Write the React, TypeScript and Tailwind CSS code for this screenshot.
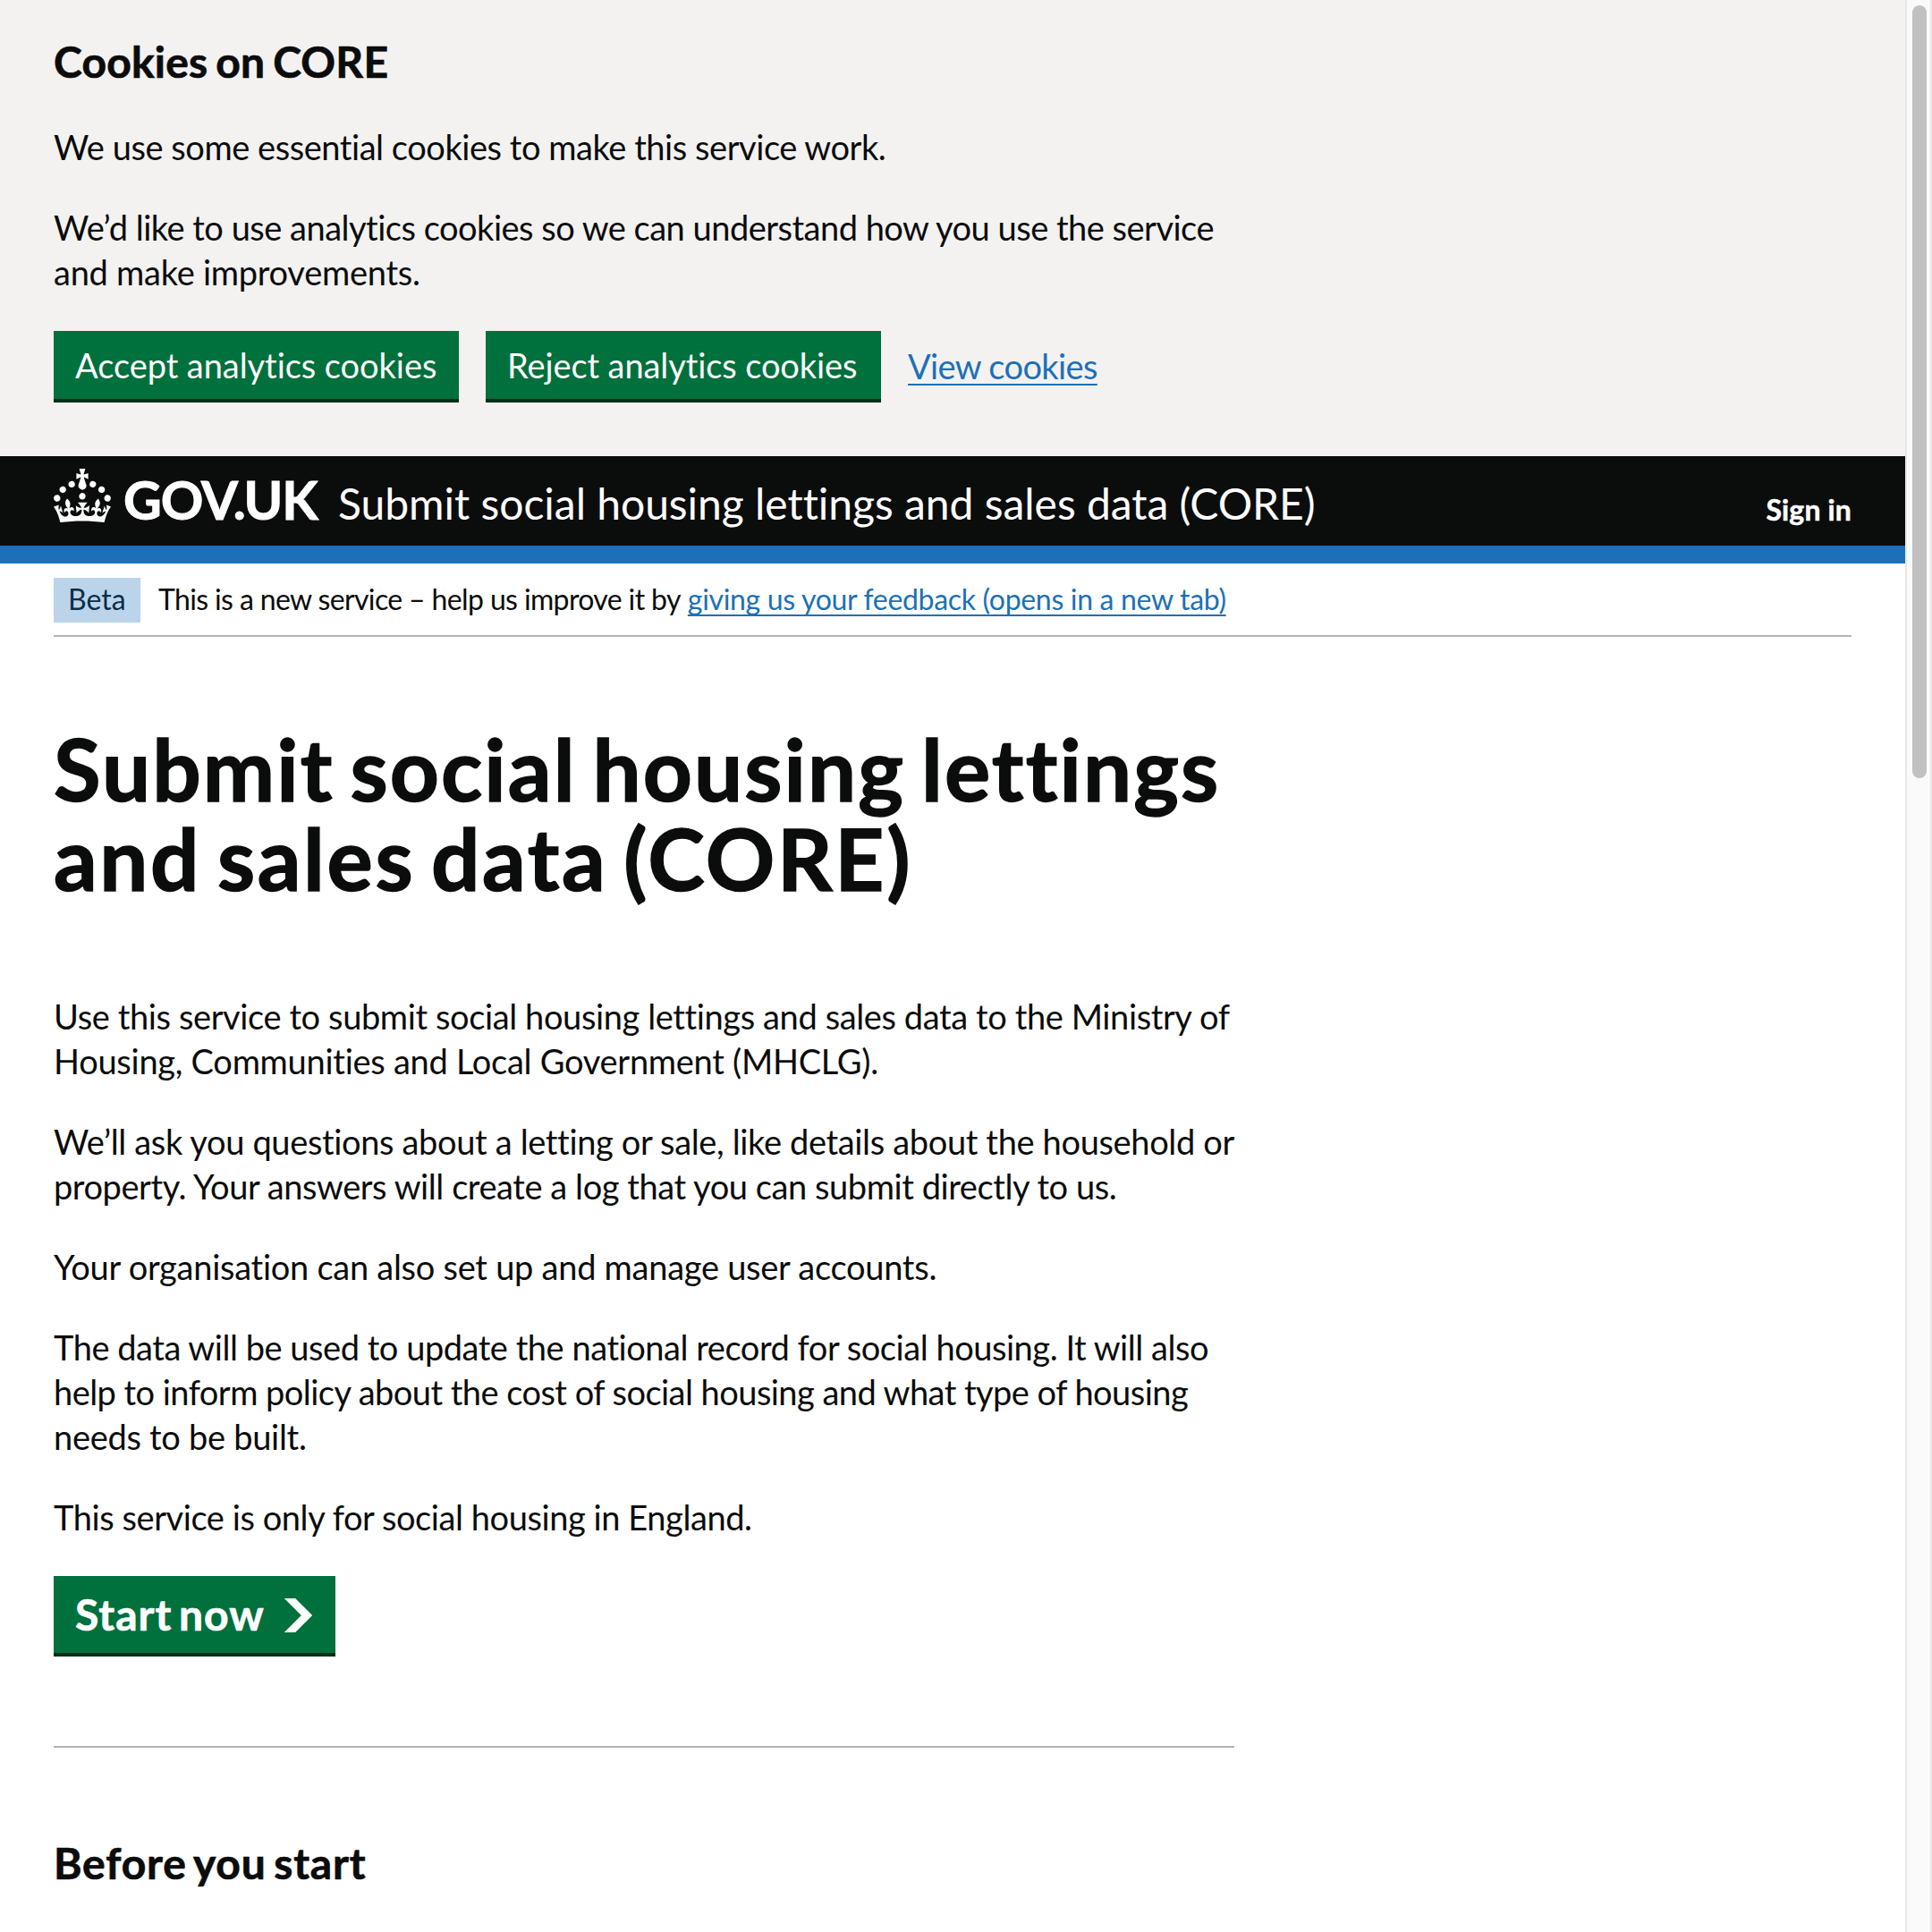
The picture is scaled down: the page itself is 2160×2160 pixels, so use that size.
import React from "react";

function Line({ className = "", children }: { className?: string; children: React.ReactNode }) {
  return <span className={`block whitespace-nowrap ${className}`}>{children}</span>;
}

function Crown() {
  return (
    <svg viewBox="0 0 32 30" className="mt-[14px] h-[60px] w-16 shrink-0" fill="currentColor" aria-hidden="true">
      <path d="M22.6 10.4c-1 .4-2-.1-2.4-1-.4-.9.1-2 1-2.4.9-.4 2 .1 2.4 1s-.1 2-1 2.4m-5.9 6.7c-.9.4-2-.1-2.4-1-.4-.9.1-2 1-2.4.9-.4 2 .1 2.4 1s-.1 2-1 2.4m10.8-3.7c-1 .4-2-.1-2.4-1-.4-.9.1-2 1-2.4.9-.4 2 .1 2.4 1s0 2-1 2.4m3.3 4.8c-1 .4-2-.1-2.4-1-.4-.9.1-2 1-2.4.9-.4 2 .1 2.4 1s-.1 2-1 2.4M17 4.7l2.3 1.2V2.5l-2.3.7-.2-.2.9-3h-3.4l.9 3-.2.2c-.1.1-2.3-.7-2.3-.7v3.4L15 4.7c.1.1.1.2.2.2l-1.3 4c-.1.2-.1.4-.1.6 0 1.1.8 2 1.9 2.2h.7c1-.2 1.9-1.1 1.9-2.1 0-.2 0-.4-.1-.6l-1.3-4c-.1-.2 0-.2.1-.3m-7.6 5.7c.9.4 2-.1 2.4-1 .4-.9-.1-2-1-2.4-.9-.4-2 .1-2.4 1s0 2 1 2.4m-5 3c.9.4 2-.1 2.4-1 .4-.9-.1-2-1-2.4-.9-.4-2 .1-2.4 1s.1 2 1 2.4m-3.2 4.8c.9.4 2-.1 2.4-1 .4-.9-.1-2-1-2.4-.9-.4-2 .1-2.4 1s0 2 1 2.4m14.8 11c4.4 0 8.6.3 12.3.8 1.1-4.5 2.4-7 3.7-8.8l-2.5-.9c.2 1.3.3 1.9 0 2.7-.4-.4-.8-1.1-1.1-2.3l-1.2 4c.7-.5 1.3-.8 2-.9-1.1 2.5-2.6 3.1-3.5 3-1.1-.2-1.7-1.2-1.5-2.1.3-1.2 1.5-1.5 2.1-.1 1.1-2.3-.8-3-2-2.3 1.9-1.9 2.1-3.5.6-5.6-2.1 1.6-2.1 3.2-1.2 5.5-1.2-1.4-3.2-.6-2.5 1.6.9-1.4 2.1-.5 1.9.8-.2 1.1-1.7 2.1-3.5 1.9-2.7-.2-2.9-2.1-2.9-3.6.7-.1 1.9.5 2.9 1.9l.4-4.3c-1.1 1.1-2.1 1.4-3.2 1.4.4-1.2 2.1-3 2.1-3h-5.4s1.7 1.9 2.1 3c-1.1 0-2.1-.2-3.2-1.4l.4 4.3c1-1.4 2.2-2 2.9-1.9-.1 1.5-.2 3.4-2.9 3.6-1.9.2-3.4-.8-3.5-1.9-.2-1.3 1-2.2 1.9-.8.7-2.3-1.2-3-2.5-1.6.9-2.2.9-3.9-1.2-5.5-1.5 2-1.3 3.7.6 5.6-1.2-.7-3.1 0-2 2.3.6-1.4 1.8-1.1 2.1.1.2.9-.3 1.9-1.5 2.1-.9.2-2.4-.5-3.5-3 .6 0 1.2.3 2 .9l-1.2-4c-.3 1.1-.7 1.9-1.1 2.3-.3-.8-.2-1.4 0-2.7l-2.9.9C1.3 23 2.6 25.5 3.7 30c3.7-.5 7.9-.8 12.3-.8" />
    </svg>
  );
}

function CookieBanner() {
  return (
    <section className="h-[510px] bg-[#f3f2f1] px-[60px] pt-[39px] text-[38px] leading-[50px]">
      <h2 className="text-[48px] leading-[60px] font-bold tracking-[0.2px] [word-spacing:-3px] [-webkit-text-stroke:0.7px]">
        Cookies on CORE
      </h2>
      <div className="mt-10 flex flex-col gap-10">
        <p>
          <Line className="tracking-[-0.45px]">We use some essential cookies to make this service work.</Line>
        </p>
        <p>
          <Line className="tracking-[-0.5px]">
            We’d like to use analytics cookies so we can understand how you use the service
          </Line>
          <Line className="tracking-[-0.26px]">and make improvements.</Line>
        </p>
      </div>
      <div className="mt-[41px] flex items-start gap-[30px]">
        <button className="h-[76px] w-[453px] bg-[#00703c] px-6 pt-[19px] pb-[19px] text-left leading-[38px] tracking-[-0.06px] whitespace-nowrap text-white shadow-[0_4px_0_#002d18]">
          Accept analytics cookies
        </button>
        <button className="h-[76px] w-[442px] bg-[#00703c] px-6 pt-[19px] pb-[19px] text-left leading-[38px] tracking-[-0.1px] whitespace-nowrap text-white shadow-[0_4px_0_#002d18]">
          Reject analytics cookies
        </button>
        <a className="mt-[14px] tracking-[-0.63px] text-[#1d70b8] underline decoration-2 underline-offset-[5px]">
          View cookies
        </a>
      </div>
    </section>
  );
}

function Header() {
  return (
    <header className="flex h-[120px] items-start border-b-[20px] border-[#1d70b8] bg-[#0b0c0c] px-[60px] whitespace-nowrap text-white">
      <Crown />
      <span className="mt-[18px] ml-[14px] w-[240px] text-[59px] leading-[61px] font-bold tracking-[-1.1px] [-webkit-text-stroke:1px]">
        GOV.UK
      </span>
      <span className="mt-[23px] text-[48px] leading-[59px] tracking-[-0.03px]">
        Submit social housing lettings and sales data (CORE)
      </span>
      <a className="mt-[39px] ml-auto text-[32px] leading-[41px] font-bold tracking-[0.15px] [-webkit-text-stroke:0.5px]">
        Sign in
      </a>
    </header>
  );
}

function PhaseBanner() {
  return (
    <div className="mx-[60px] flex h-[82px] items-start border-b-2 border-[#b1b4b6] pt-4 text-[32px] leading-10 whitespace-nowrap">
      <strong className="h-[50px] w-[97px] bg-[#bbd4ea] pt-1 pl-4 font-normal text-[#0c2d4a]">Beta</strong>
      <span className="mt-1 ml-5 tracking-[-0.63px]">This is a new service – help us improve it by</span>
      <a className="mt-1 ml-2 tracking-[-0.32px] text-[#1d70b8] underline decoration-2 underline-offset-[5px] [text-decoration-skip-ink:none]">
        giving us your feedback (opens in a new tab)
      </a>
    </div>
  );
}

function StartPage() {
  return (
    <main className="ml-[60px] w-[1320px] pt-[97px] text-[38px] leading-[50px]">
      <h1 className="text-[96px] leading-[100px] font-bold [-webkit-text-stroke:1.4px]">
        <Line className="tracking-[2.1px] [word-spacing:-7.5px]">Submit social housing lettings</Line>
        <Line className="tracking-[2.6px] [word-spacing:-8.1px]">and sales data (CORE)</Line>
      </h1>
      <div className="mt-[102px] flex flex-col gap-10">
        <p>
          <Line className="tracking-[-0.39px]">
            Use this service to submit social housing lettings and sales data to the Ministry of
          </Line>
          <Line className="tracking-[-0.27px]">Housing, Communities and Local Government (MHCLG).</Line>
        </p>
        <p>
          <Line className="tracking-[-0.35px]">
            We’ll ask you questions about a letting or sale, like details about the household or
          </Line>
          <Line className="tracking-[-0.43px]">
            property. Your answers will create a log that you can submit directly to us.
          </Line>
        </p>
        <p>
          <Line className="tracking-[-0.27px]">Your organisation can also set up and manage user accounts.</Line>
        </p>
        <p>
          <Line className="tracking-[-0.46px]">
            The data will be used to update the national record for social housing. It will also
          </Line>
          <Line className="tracking-[-0.54px]">
            help to inform policy about the cost of social housing and what type of housing
          </Line>
          <Line className="tracking-[-0.29px]">needs to be built.</Line>
        </p>
        <p>
          <Line className="tracking-[-0.43px]">This service is only for social housing in England.</Line>
        </p>
      </div>
      <button className="mt-[41px] flex h-[86px] w-[315px] items-start justify-between bg-[#00703c] px-6 pt-[19px] text-[48px] leading-[48px] font-bold whitespace-nowrap text-white shadow-[0_4px_0_#002d18]">
        <span className="tracking-[1px] [word-spacing:-5px] [-webkit-text-stroke:0.7px]">Start now</span>
        <svg viewBox="0 0 33 40" className="mt-[6px] h-[38px] w-[35px]" fill="currentColor" aria-hidden="true">
          <path d="M0 0h13l20 20-20 20H0l20-20z" />
        </svg>
      </button>
      <hr className="mt-[104px] border-t-2 border-[#b1b4b6]" />
      <h2 className="mt-[99px] text-[48px] leading-[60px] font-bold tracking-[0.85px] [word-spacing:-4px] [-webkit-text-stroke:0.7px]">
        Before you start
      </h2>
    </main>
  );
}

export default function App() {
  return (
    <div className="flex h-[2160px] w-[2160px] overflow-hidden bg-white font-['Lato','Noto_Sans',sans-serif] text-[#0b0c0c]">
      <div className="w-[2130px] shrink-0">
        <CookieBanner />
        <Header />
        <PhaseBanner />
        <StartPage />
      </div>
      <div className="w-[30px] shrink-0 border-x-2 border-[#e8e8e8] bg-[#fafafa] pt-1.5 pl-1.5">
        <div className="h-[864px] w-4 rounded-full bg-[#c1c1c1]" />
      </div>
    </div>
  );
}
